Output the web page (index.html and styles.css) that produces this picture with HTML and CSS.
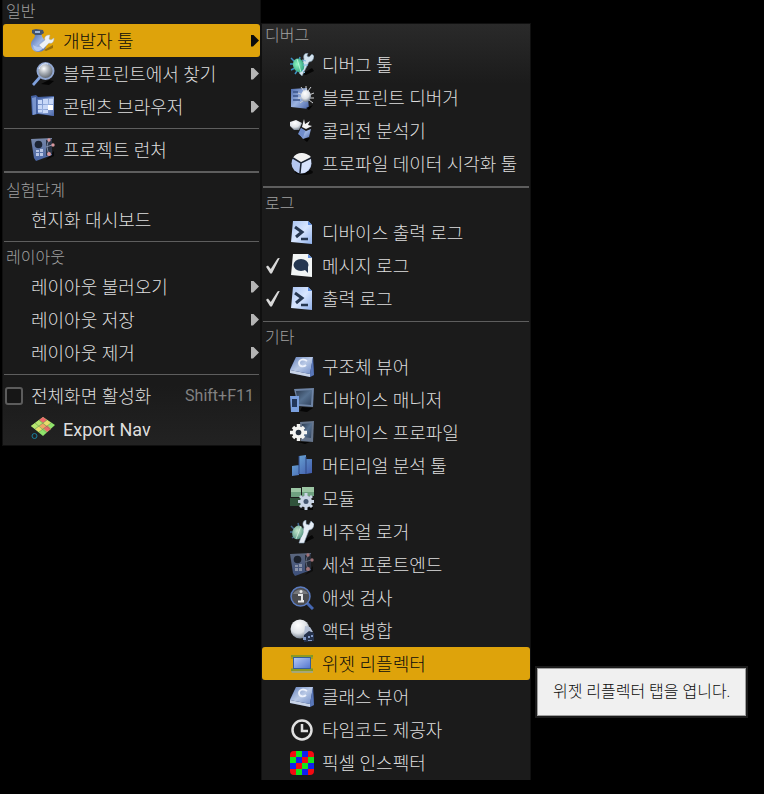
FILE: index.html
```html
<!DOCTYPE html>
<html lang="ko">
<head>
    <meta charset="UTF-8">
    <meta name="viewport" content="width=device-width, initial-scale=1.0">
    <title>개발자 툴</title>
    <link rel="stylesheet" href="styles.css">
</head>
<body>
    <!-- shared icon shapes -->
    <svg class="defs" aria-hidden="true">
        <defs>
            <linearGradient id="blue" x1="0" y1="0" x2="1" y2="1">
                <stop offset="0" stop-color="#4d6aab"/><stop offset=".5" stop-color="#9cb4e2"/><stop offset="1" stop-color="#4763a6"/>
            </linearGradient>
            <linearGradient id="panel" x1="0" y1="0" x2="0" y2="1">
                <stop offset="0" stop-color="#7888a8"/><stop offset="1" stop-color="#4a66a6"/>
            </linearGradient>
            <linearGradient id="book" x1="0" y1="0" x2="1" y2="1">
                <stop offset="0" stop-color="#5f7db8"/><stop offset=".5" stop-color="#b9c9e6"/><stop offset="1" stop-color="#6f8cc6"/>
            </linearGradient>
            <linearGradient id="page" x1="0" y1="0" x2="1" y2="1">
                <stop offset="0" stop-color="#a9c4f2"/><stop offset=".5" stop-color="#d8e6ff"/><stop offset="1" stop-color="#8fb0ea"/>
            </linearGradient>
            <linearGradient id="display" x1="0" y1="0" x2="1" y2="1">
                <stop offset="0" stop-color="#b4c8f4"/><stop offset="1" stop-color="#5577cf"/>
            </linearGradient>
            <linearGradient id="screen" x1="0" y1="0" x2="1" y2="1">
                <stop offset="0" stop-color="#2c3b50"/><stop offset=".5" stop-color="#56708f"/><stop offset="1" stop-color="#31435d"/>
            </linearGradient>
            <linearGradient id="bar" x1="0" y1="0" x2="1" y2="1">
                <stop offset="0" stop-color="#6fb0dc"/><stop offset="1" stop-color="#3f57a8"/>
            </linearGradient>
            <radialGradient id="glass" cx=".4" cy=".35" r=".7">
                <stop offset="0" stop-color="#ffffff"/><stop offset=".45" stop-color="#a7adb4"/><stop offset="1" stop-color="#4c535d"/>
            </radialGradient>
            <radialGradient id="ball" cx=".4" cy=".3" r=".7">
                <stop offset="0" stop-color="#ffffff"/><stop offset=".6" stop-color="#dfe3e8"/><stop offset="1" stop-color="#7b8694"/>
            </radialGradient>
            <radialGradient id="green" cx=".4" cy=".4" r=".7">
                <stop offset="0" stop-color="#8df5c0"/><stop offset="1" stop-color="#2a9c7c"/>
            </radialGradient>
            <radialGradient id="pale" cx=".4" cy=".4" r=".7">
                <stop offset="0" stop-color="#c4e8cc"/><stop offset="1" stop-color="#4f8f80"/>
            </radialGradient>
            <clipPath id="rounded"><rect width="24" height="24" rx="4"/></clipPath>
        </defs>
        <symbol id="i-tools" viewBox="0 0 24 24">
            <path d="M13 21l9-5v3l-7 3z" fill="#956d0c"/>
            <path d="M1 1l4-1 7 1 1 3-3 2H4L1 4z" fill="#42536f"/>
            <path d="M4 2h5v2H4z" fill="#9db4d8"/>
            <path d="M4 6h7c-1 2 3 4 4 8 1 6-3 9-8 9-4 0-7-3-7-8 0-4 4-5 4-9z" fill="url(#blue)"/>
            <path d="M2 16c4 3 8 2 11-1-1 5-3 7-6 7s-4-2-5-6z" fill="#b5c8ee"/>
            <path d="M19 6l-1 4 2 1 3-2c0 4-2 6-5 5l-6 6-4-4 6-5c-1-3 1-5 5-5z" fill="#eef2f6" stroke="#aab6c8" stroke-width=".5"/>
        </symbol>
        <symbol id="i-find" viewBox="0 0 24 24">
            <path d="M10 22l8-4 5 1-5 4z" fill="#050505"/>
            <path d="M1 22l7-8 2 2-7 8z" fill="#7fa0dc"/>
            <circle cx="14.500" cy="9" r="8" fill="url(#glass)" stroke="#91a7d1" stroke-width="2"/>
            <path d="M8 7c1-4 5-6 9-5" fill="none" stroke="#e1ebff" stroke-width="1"/>
        </symbol>
        <symbol id="i-content" viewBox="0 0 24 24">
            <path d="M0 1l5-1 2 2 16-1v20l-16-2-6 1z" fill="#4460a0"/>
            <path d="M1 3l4-1v17l-3 1z" fill="#7894cd"/>
            <path d="M6 4l17-2v19L7 18z" fill="url(#blue)"/>
            <path d="M7 5h4v4H7zM12 4h5v5h-5zM18 4h4v5h-4zM7 10h4v4H7zM12 10h5v4h-5zM7 15h4v2H7zM12 15h5v3h-5z" fill="#c8d8f8"/>
            <path d="M17 10h5v5h-5z" fill="#fff"/>
        </symbol>
        <symbol id="i-session" viewBox="0 0 24 24">
            <path d="M15 22l8-4v-5z" fill="#080808"/>
            <path d="M0 1l21-1v17L5 23 3 20z" fill="url(#panel)"/>
            <path d="M15 2l6-1v15l-6 2z" fill="#2b3446"/>
            <circle cx="7.500" cy="6.500" r="3.800" fill="#1c2433"/>
            <path d="M5 12h3v2H5zM9 11h3v3H9zM5 15h3v3H5zM9 15h3v3H9z" fill="#b9c6e4"/>
            <path d="M18 3c-3 3-2 10 0 12M15 9l6-2" stroke="#8290ac" fill="none"/>
            <circle cx="18" cy="2" r="1.700" fill="#d9989e"/><circle cx="22" cy="7" r="1.700" fill="#d9989e"/><circle cx="18" cy="16" r="2" fill="#d9989e"/>
        </symbol>
        <symbol id="i-nav" viewBox="0 0 24 24">
            <path d="M12 0l12 8-12 11L0 9z" fill="#8fe36b"/>
            <path d="M12 0l4 3-4 3-4-3zM16 8l4 4-4 3-4-4z" fill="#ec696b"/>
            <path d="M8 3l4 3-4 3-4-3zM4 6l4 3-4 3-4-3z" fill="#b7e66e"/>
            <path d="M12 6l4 3-4 3-4-3z" fill="#efa466"/>
            <path d="M8 9l4 3-4 3-4-3zM16 3l4 3-4 3-4-3z" fill="#e9dc6d"/>
            <path d="M8 3l12 10M4 6l12 10M16 3L4 12M20 6L8 15" stroke="#5d8a4c" stroke-width=".5"/>
            <circle cx="3.500" cy="19" r="2.500" fill="none" stroke="#197e9c" stroke-width="1"/>
        </symbol>
        <symbol id="i-bug" viewBox="0 0 24 24">
            <path d="M12 21l10-6 2 3-8 4z" fill="#060606"/>
            <path d="M1 5l4 4M0 11h4M1 17l4-2M5 21l2-3M10 4L9 8" stroke="#3c8fc4" stroke-width="1.500"/>
            <path d="M22 1l-3 3-2-1 1-3c-4 0-5 3-4 6L9 20l3 3 7-14c3 0 5-3 5-6z" fill="#d3e3ef" stroke="#6d8798" stroke-width=".6"/>
            <ellipse cx="8.500" cy="12.500" rx="5.500" ry="7" transform="rotate(-20 8 12)" fill="url(#green)"/>
            <path d="M7 6l4 13" stroke="#d4ffea" stroke-width=".7"/>
            <path d="M12 7l4 1M13 12h5M12 17l3 3" stroke="#77b9df"/>
        </symbol>
        <symbol id="i-visual" viewBox="0 0 24 24">
            <path d="M12 21l10-6 2 3-8 4z" fill="#060606"/>
            <path d="M1 6l4 4M0 12h4M2 18l3-2M8 3l1 4" stroke="#41678f" stroke-width="1.500"/>
            <path d="M21 1l-2 4-3-1v-4c-3 1-4 4-2 7L10 20l-1 3h5l5-13c3 0 5-3 5-6z" fill="#e6edf6" stroke="#8ba1b5" stroke-width=".6"/>
            <ellipse cx="8" cy="12.500" rx="5.500" ry="7" transform="rotate(20 8 12)" fill="url(#pale)"/>
            <path d="M11 6L6 19" stroke="#e2f5e6" stroke-width=".7"/>
        </symbol>
        <symbol id="i-bpbug" viewBox="0 0 24 24">
            <path d="M1 3l16-1 2 21-18-2z" fill="url(#blue)"/>
            <path d="M3 6h5M3 10h5M3 14h7" stroke="#3a5388" stroke-width="1.500"/>
            <path d="M16 22l7-3-4 5z" fill="#050505"/>
            <path d="M11 1l3 4M21 1l-3 4M8 7l5 2M24 7l-5 2M8 12h5M24 12h-5M10 17l4-3M23 17l-4-3M16 0v5" stroke="#cfd1d3" stroke-width="1"/>
            <ellipse cx="16" cy="10" rx="5" ry="6" fill="url(#ball)"/>
        </symbol>
        <symbol id="i-collide" viewBox="0 0 24 24">
            <path d="M7 15l5 3 8 1-3 4z" fill="#050505"/>
            <path d="M0 3l6-2 6 3-3 7-5 0-4-4z" fill="url(#ball)"/>
            <path d="M12 8l2-8 1 5 5-3-2 4 4 1-6 3z" fill="#f5f5f5"/>
            <path d="M11 9l5 3 5-2-2 8-6 2-4-5z" fill="url(#blue)"/>
            <path d="M11 9l4 3-2 7-5-4z" fill="#6f8ccb"/>
        </symbol>
        <symbol id="i-pie" viewBox="0 0 24 24">
            <ellipse cx="14" cy="20" rx="9" ry="3" fill="#070707"/>
            <circle cx="11.500" cy="11.500" r="10" fill="#b4c6ef"/>
            <path d="M12 11L3 6c3-6 12-7 18-1z" fill="#f2f2f2"/>
            <path d="M12 11L10 21c7 1 12-5 11-15z" fill="#d7e3fc"/>
            <path d="M3 6l8 5 10-5M11 11l-1 10" fill="none" stroke="#1c2432" stroke-width="1.500"/>
        </symbol>
        <symbol id="i-output" viewBox="0 0 24 24">
            <path d="M3 0h15l4 4v19L1 21z" fill="url(#page)"/>
            <path d="M18 0v4h4z" fill="#5d8de0"/>
            <path d="M5 6l7 5-6 5" fill="none" stroke="#263750" stroke-width="3"/>
            <path d="M11 18h7" stroke="#263750" stroke-width="2.500"/>
        </symbol>
        <symbol id="i-message" viewBox="0 0 24 24">
            <path d="M3 0h15l4 4v19L1 21z" fill="#f2f5f5"/>
            <path d="M18 0v4h4z" fill="#5d8de0"/>
            <ellipse cx="11" cy="11" rx="7.500" ry="6" fill="#253750"/>
            <path d="M13 14l5-2v7z" fill="#253750"/>
        </symbol>
        <symbol id="i-book" viewBox="0 0 24 24">
            <path d="M6 2h17l1 18-4 2L0 18v-4z" fill="#26375f"/>
            <path d="M0 15l20 4v3L0 18z" fill="#c9d4e8"/>
            <path d="M6 2h17l-3 17-20-4z" fill="url(#book)"/>
            <path d="M17 6c-4-3-8-1-8 2 0 4 5 4 7 2" fill="none" stroke="#edf2fc" stroke-width="1.800"/>
            <path d="M23 2l1 18-4 2v-3z" fill="#5977b8"/>
        </symbol>
        <symbol id="i-device" viewBox="0 0 24 24">
            <path d="M12 19l11 1-6 4-7-1z" fill="#060606"/>
            <path d="M4 1l20-1-1 19-15-1z" fill="#6e84a5"/>
            <path d="M6 3l16-1-1 15-13-1z" fill="url(#screen)"/>
            <path d="M0 8h9v16H1z" fill="#7aa0df"/>
            <path d="M2 11h5v8H2z" fill="#22375b"/>
        </symbol>
        <symbol id="i-profile" viewBox="0 0 24 24">
            <path d="M10 1l14-1-1 21-12-1z" fill="#66758c"/>
            <path d="M12 3l10-1-1 15-9-1z" fill="url(#screen)"/>
            <path d="M8 21h12l-5 2z" fill="#060606"/>
            <path d="M8.500 3v17M0 11.500h17M3 6l11 11M14 6L3 17" stroke="#f4f4f2" stroke-width="3.500"/>
            <circle cx="8.500" cy="11.500" r="6" fill="#f4f4f2"/><circle cx="8.500" cy="11.500" r="2.800" fill="#26313f"/>
        </symbol>
        <symbol id="i-stats" viewBox="0 0 24 24">
            <path d="M2 12l7-1v10l-7 1zM9 2l7-1v19H9zM16 5h6v14l-6 1z" fill="url(#bar)"/>
            <path d="M9 2v18M16 3v17" stroke="#2c4783" stroke-width="1"/>
        </symbol>
        <symbol id="i-module" viewBox="0 0 24 24">
            <path d="M1 1h10v9H1zM12 0h12v9H12z" fill="#6fa180"/>
            <path d="M1 1h10v4H1zM12 0h12v5H12z" fill="#9cc6a4"/>
            <path d="M0 11h11v8H0z" fill="#30533b"/>
            <path d="M8 23l15-3v3z" fill="#050505"/>
            <path d="M16 6v17M8 14.500h16M10 9l12 11M22 9L10 20" stroke="#c9d4e5" stroke-width="3"/>
            <circle cx="16" cy="14.500" r="6" fill="#c9d4e5"/><circle cx="16" cy="14.500" r="2.500" fill="#45566f"/>
        </symbol>
        <symbol id="i-asset" viewBox="0 0 24 24">
            <path d="M17 17l6 6" stroke="#4567b2" stroke-width="3"/>
            <circle cx="10.500" cy="10.500" r="9.500" fill="#4b4c50" stroke="#5b7cc0" stroke-width="1.500"/>
            <path d="M3 8c3-6 12-6 15 0z" fill="#77787c"/>
            <path d="M8 9h4v6h2M8 15.500h6" fill="none" stroke="#e8e8e8" stroke-width="2"/><circle cx="11" cy="5.500" r="1.500" fill="#e8e8e8"/>
        </symbol>
        <symbol id="i-merge" viewBox="0 0 24 24">
            <circle cx="10" cy="10" r="9.500" fill="url(#ball)"/>
            <path d="M15 7l5 1 3 5-4 1-5 3z" fill="#b4c0d6"/>
            <path d="M14 16l5-4 5 2v8l-10 1z" fill="#26334d"/>
            <path d="M13 18h3v3h-3zM18 17h2v2h-2zM18 21h4v1h-4zM21 16h2v2h-2z" fill="#8299c6"/>
        </symbol>
        <symbol id="i-widget" viewBox="0 0 24 24">
            <path d="M1 4h22M1 18h22" stroke="#71982c" stroke-width="1.500"/>
            <path d="M2 3v4M22 3v4M2 16v4M22 16v4" stroke="#71982c"/>
            <path d="M3 5h18v12H3z" fill="#355e9a"/>
            <path d="M4 6h16v10H4z" fill="url(#display)"/>
            <path d="M1 19h22v2H2z" fill="#a7a776"/>
        </symbol>
        <symbol id="i-clock" viewBox="0 0 24 24">
            <circle cx="12" cy="12" r="9.500" fill="none" stroke="#e0e0e0" stroke-width="2.500"/>
            <path d="M12 6v7h6" fill="none" stroke="#e0e0e0" stroke-width="2.500"/>
        </symbol>
        <symbol id="i-pixel" viewBox="0 0 24 24">
            <g clip-path="url(#rounded)">
                <path d="M0 0h24v24H0z" fill="#f50a12"/>
                <path d="M12 0h6v6h-6zM6 6h6v6H6zM0 12h6v6H0zM18 12h6v6h-6zM12 18h6v6h-6z" fill="#1020f0"/>
                <path d="M6 0h6v6H6zM0 6h6v6H0zM18 6h6v6h-6zM12 12h6v6h-6zM6 18h6v6H6z" fill="#12e51c"/>
            </g>
        </symbol>
    </svg>

    <main class="editor">
        <nav class="menu menu-main" aria-label="창">
            <h2 class="heading">일반</h2>
            <button type="button" class="item active" aria-haspopup="true" aria-expanded="true"><span class="slot"></span><svg class="icon"><use href="#i-tools"/></svg><span class="label">개발자 툴</span><span class="arrow"></span></button>
            <button type="button" class="item" aria-haspopup="true"><span class="slot"></span><svg class="icon"><use href="#i-find"/></svg><span class="label">블루프린트에서 찾기</span><span class="arrow"></span></button>
            <button type="button" class="item" aria-haspopup="true"><span class="slot"></span><svg class="icon"><use href="#i-content"/></svg><span class="label">콘텐츠 브라우저</span><span class="arrow"></span></button>
            <hr class="line">
            <button type="button" class="item"><span class="slot"></span><svg class="icon"><use href="#i-session"/></svg><span class="label">프로젝트 런처</span></button>
            <hr class="line thick">
            <h2 class="heading">실험단계</h2>
            <button type="button" class="item"><span class="slot"></span><span class="label">현지화 대시보드</span></button>
            <hr class="line">
            <h2 class="heading">레이아웃</h2>
            <button type="button" class="item" aria-haspopup="true"><span class="slot"></span><span class="label">레이아웃 불러오기</span><span class="arrow"></span></button>
            <button type="button" class="item" aria-haspopup="true"><span class="slot"></span><span class="label">레이아웃 저장</span><span class="arrow"></span></button>
            <button type="button" class="item" aria-haspopup="true"><span class="slot"></span><span class="label">레이아웃 제거</span><span class="arrow"></span></button>
            <hr class="line">
            <label class="item" for="fullscreen"><span class="slot"><input type="checkbox" id="fullscreen" class="box"></span><span class="label">전체화면 활성화</span><span class="shortcut">Shift+F11</span></label>
            <button type="button" class="item"><span class="slot"></span><svg class="icon"><use href="#i-nav"/></svg><span class="label latin">Export Nav</span></button>
        </nav>

        <nav class="menu menu-sub" aria-label="개발자 툴">
            <h2 class="heading">디버그</h2>
            <button type="button" class="item"><span class="slot"></span><svg class="icon"><use href="#i-bug"/></svg><span class="label">디버그 툴</span></button>
            <button type="button" class="item"><span class="slot"></span><svg class="icon"><use href="#i-bpbug"/></svg><span class="label">블루프린트 디버거</span></button>
            <button type="button" class="item"><span class="slot"></span><svg class="icon"><use href="#i-collide"/></svg><span class="label">콜리전 분석기</span></button>
            <button type="button" class="item"><span class="slot"></span><svg class="icon"><use href="#i-pie"/></svg><span class="label">프로파일 데이터 시각화 툴</span></button>
            <hr class="line thick">
            <h2 class="heading">로그</h2>
            <label class="item" for="device-log"><span class="slot"><input type="checkbox" id="device-log" class="tick"></span><svg class="icon"><use href="#i-output"/></svg><span class="label">디바이스 출력 로그</span></label>
            <label class="item" for="message-log"><span class="slot"><input type="checkbox" id="message-log" class="tick" checked></span><svg class="icon"><use href="#i-message"/></svg><span class="label">메시지 로그</span></label>
            <label class="item" for="output-log"><span class="slot"><input type="checkbox" id="output-log" class="tick" checked></span><svg class="icon"><use href="#i-output"/></svg><span class="label">출력 로그</span></label>
            <hr class="line">
            <h2 class="heading">기타</h2>
            <button type="button" class="item"><span class="slot"></span><svg class="icon"><use href="#i-book"/></svg><span class="label">구조체 뷰어</span></button>
            <button type="button" class="item"><span class="slot"></span><svg class="icon"><use href="#i-device"/></svg><span class="label">디바이스 매니저</span></button>
            <button type="button" class="item"><span class="slot"></span><svg class="icon"><use href="#i-profile"/></svg><span class="label">디바이스 프로파일</span></button>
            <button type="button" class="item"><span class="slot"></span><svg class="icon"><use href="#i-stats"/></svg><span class="label">머티리얼 분석 툴</span></button>
            <button type="button" class="item"><span class="slot"></span><svg class="icon"><use href="#i-module"/></svg><span class="label">모듈</span></button>
            <button type="button" class="item"><span class="slot"></span><svg class="icon"><use href="#i-visual"/></svg><span class="label">비주얼 로거</span></button>
            <button type="button" class="item"><span class="slot"></span><svg class="icon dim"><use href="#i-session"/></svg><span class="label">세션 프론트엔드</span></button>
            <button type="button" class="item"><span class="slot"></span><svg class="icon"><use href="#i-asset"/></svg><span class="label">애셋 검사</span></button>
            <button type="button" class="item"><span class="slot"></span><svg class="icon"><use href="#i-merge"/></svg><span class="label">액터 병합</span></button>
            <div class="tip-anchor">
                <button type="button" class="item active" aria-describedby="tip"><span class="slot"></span><svg class="icon"><use href="#i-widget"/></svg><span class="label">위젯 리플렉터</span></button>
                <div class="tooltip" id="tip" role="tooltip">위젯 리플렉터 탭을 엽니다.</div>
            </div>
            <button type="button" class="item"><span class="slot"></span><svg class="icon"><use href="#i-book"/></svg><span class="label">클래스 뷰어</span></button>
            <button type="button" class="item"><span class="slot"></span><svg class="icon"><use href="#i-clock"/></svg><span class="label">타임코드 제공자</span></button>
            <button type="button" class="item"><span class="slot"></span><svg class="icon"><use href="#i-pixel"/></svg><span class="label">픽셀 인스펙터</span></button>
        </nav>
    </main>
</body>
</html>
```
FILE: styles.css
```css
* {
    box-sizing: border-box;
}
body {
    margin: 0;
    background-color: #000;
    color: #dedede;
    font-family: Roboto, "Noto Sans CJK KR", sans-serif;
    font-size: 18px;
    font-weight: 300;
}
.defs {
    position: absolute;
    width: 0;
    height: 0;
}
.editor {
    display: flex;
    align-items: flex-start;
    gap: 2px;
    padding-left: 3px;
}
.menu {
    background-color: #1a1a1a;
    box-shadow: 0 0 0 1px #101010;
}
.menu-main {
    min-width: 257px;
    background-image: linear-gradient(to top, #222, #1a1a1a 60px);
}
.menu-sub {
    min-width: 268px;
    margin-top: 24px;
    padding-bottom: 1px;
    background-image: linear-gradient(#2a2a2a, #1b1b1b 60px);
}
.heading {
    height: 24px;
    margin: 0;
    padding-left: 3px;
    color: #a0a0a0;
    font-size: 16px;
    font-weight: 300;
    line-height: 24px;
}
.item {
    display: flex;
    align-items: center;
    width: 100%;
    height: 33px;
    padding: 0 6px 0 0;
    border: none;
    border-radius: 3px;
    background: none;
    color: inherit;
    font: inherit;
    line-height: 31px;
    text-align: left;
    white-space: nowrap;
    cursor: pointer;
}
.item.active {
    background-color: #dea30b;
    color: #0c0c0c;
}
.slot {
    display: flex;
    align-items: center;
    justify-content: center;
    flex: none;
    width: 22px;
    margin-right: 6px;
}
.icon {
    flex: none;
    width: 24px;
    height: 24px;
    margin-right: 8px;
}
.icon.dim {
    opacity: 0.7;
}
.label {
    flex: 1;
    padding-top: 2px;
}
.label.latin {
    font-weight: 400;
}
/* submenu arrow */
.arrow {
    width: 8px;
    height: 12px;
    margin-right: -5px;
    background-color: #b5b5b5;
    clip-path: polygon(0 0, 25% 0, 100% 50%, 25% 100%, 0 100%);
}
.active .arrow {
    background-color: #0c0c0c;
}
.shortcut {
    color: #828282;
    font-size: 16px;
    font-weight: 400;
}
.box {
    appearance: none;
    width: 18px;
    height: 18px;
    margin: 0;
    border: 2px solid #5c5c5c;
    border-radius: 3px;
    background-color: #161616;
}
.tick {
    appearance: none;
    width: 14px;
    height: 16px;
    margin: 0;
}
.tick:checked {
    background-color: #d9d9d9;
    clip-path: polygon(0 58%, 14% 50%, 34% 72%, 82% 6%, 100% 0, 42% 100%, 30% 100%);
}
.line {
    height: 1px;
    margin: 6px 1px 4px;
    border: none;
    background-color: #5e5e5e;
}
.line.thick {
    height: 2px;
}
.menu-main .line {
    margin: 5px 1px 4px;
}
.menu-main .line.thick {
    margin-bottom: 6px;
}
.tip-anchor {
    position: relative;
}
.tooltip {
    position: absolute;
    top: 21px;
    left: 100%;
    margin-left: 7px;
    padding: 12px 15px;
    border: 1px solid #a0a0a0;
    background-color: #f0f0f0;
    box-shadow: 0 0 0 2px #1c1c1c;
    color: #0c0c0c;
    font-size: 16px;
    line-height: 22px;
    white-space: nowrap;
}
```
